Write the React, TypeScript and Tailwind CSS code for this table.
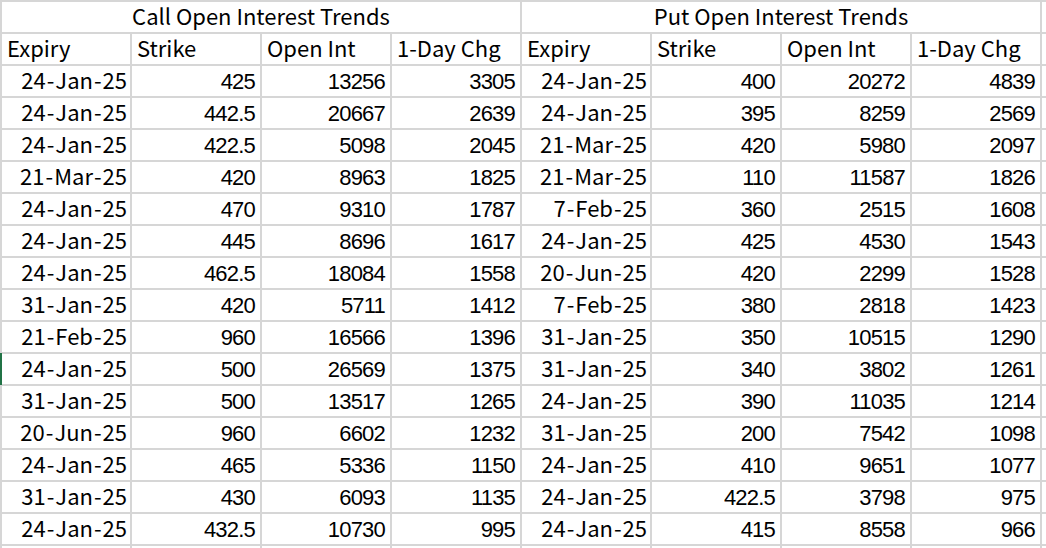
import React from "react";

const call: [string, string, string, string][] = [
  ["24-Jan-25", "425", "13256", "3305"],
  ["24-Jan-25", "442.5", "20667", "2639"],
  ["24-Jan-25", "422.5", "5098", "2045"],
  ["21-Mar-25", "420", "8963", "1825"],
  ["24-Jan-25", "470", "9310", "1787"],
  ["24-Jan-25", "445", "8696", "1617"],
  ["24-Jan-25", "462.5", "18084", "1558"],
  ["31-Jan-25", "420", "5711", "1412"],
  ["21-Feb-25", "960", "16566", "1396"],
  ["24-Jan-25", "500", "26569", "1375"],
  ["31-Jan-25", "500", "13517", "1265"],
  ["20-Jun-25", "960", "6602", "1232"],
  ["24-Jan-25", "465", "5336", "1150"],
  ["31-Jan-25", "430", "6093", "1135"],
  ["24-Jan-25", "432.5", "10730", "995"],
];

const put: [string, string, string, string][] = [
  ["24-Jan-25", "400", "20272", "4839"],
  ["24-Jan-25", "395", "8259", "2569"],
  ["21-Mar-25", "420", "5980", "2097"],
  ["21-Mar-25", "110", "11587", "1826"],
  ["7-Feb-25", "360", "2515", "1608"],
  ["24-Jan-25", "425", "4530", "1543"],
  ["20-Jun-25", "420", "2299", "1528"],
  ["7-Feb-25", "380", "2818", "1423"],
  ["31-Jan-25", "350", "10515", "1290"],
  ["31-Jan-25", "340", "3802", "1261"],
  ["24-Jan-25", "390", "11035", "1214"],
  ["31-Jan-25", "200", "7542", "1098"],
  ["24-Jan-25", "410", "9651", "1077"],
  ["24-Jan-25", "422.5", "3798", "975"],
  ["24-Jan-25", "415", "8558", "966"],
];

function DateCell({ v }: { v: string }) {
  const parts = v.split("-");
  return (
    <div className="bg-white h-[30px] flex items-center justify-end pr-[3px] pb-[4px] text-[22px] leading-none text-black font-[Noto_Sans_CJK_SC]">
      {parts.map((p, i) => (
        <React.Fragment key={i}>
          {i > 0 && <span className="px-[1px]">-</span>}
          <span>{p}</span>
        </React.Fragment>
      ))}
    </div>
  );
}

function NumCell({ v }: { v: string }) {
  return (
    <div className="bg-white h-[30px] flex items-center justify-end pr-[5px] pt-[2px] text-[22px] tracking-[-0.8px] leading-none text-black font-[Liberation_Sans]">
      {v}
    </div>
  );
}

function HeadCell({ v }: { v: string }) {
  return (
    <div className="bg-white h-[30px] flex items-center justify-start pl-[5px] pb-[4px] text-[22px] leading-none text-black font-[Noto_Sans_CJK_SC]">
      {v}
    </div>
  );
}

export default function App() {
  const heads = ["Expiry", "Strike", "Open Int", "1-Day Chg"];
  return (
    <div className="w-[1046px] h-[548px] overflow-hidden bg-white">
      <div className="grid grid-cols-[repeat(9,128px)] gap-[2px] bg-[#d6d6d6] pl-[2px] pt-[2px] w-max relative">
        <div className="col-span-4 bg-white h-[30px] flex items-center justify-center pb-[4px] text-[22px] leading-none text-black font-[Noto_Sans_CJK_SC]">
          Call Open Interest Trends
        </div>
        <div className="col-span-4 bg-white h-[30px] flex items-center justify-center pb-[4px] text-[22px] leading-none text-black font-[Noto_Sans_CJK_SC]">
          Put Open Interest Trends
        </div>
        <div className="bg-white h-[30px]" />
        {heads.map((h, i) => (
          <HeadCell key={"c" + i} v={h} />
        ))}
        {heads.map((h, i) => (
          <HeadCell key={"p" + i} v={h} />
        ))}
        <div className="bg-white h-[30px]" />
        {call.map((r, i) => (
          <React.Fragment key={i}>
            <DateCell v={r[0]} />
            <NumCell v={r[1]} />
            <NumCell v={r[2]} />
            <NumCell v={r[3]} />
            <DateCell v={put[i][0]} />
            <NumCell v={put[i][1]} />
            <NumCell v={put[i][2]} />
            <NumCell v={put[i][3]} />
            <div className="bg-white h-[30px]" />
          </React.Fragment>
        ))}
        {Array.from({ length: 9 }).map((_, i) => (
          <div key={"e" + i} className="bg-white h-[30px]" />
        ))}
        <div className="absolute left-0 top-[353px] w-[2px] h-[32px] bg-[#217346]" />
      </div>
    </div>
  );
}
